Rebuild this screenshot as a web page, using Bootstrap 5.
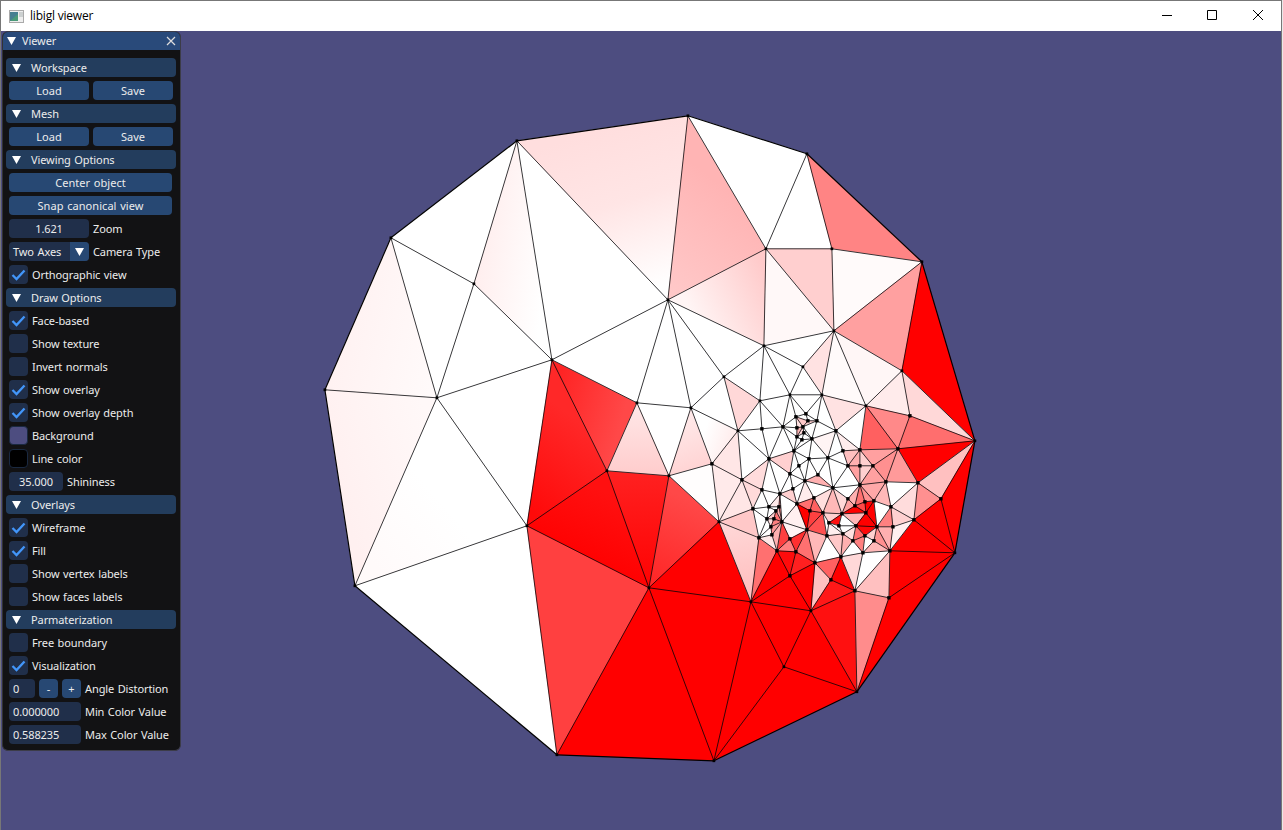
<!DOCTYPE html>
<html lang="en">
<head>
<meta charset="utf-8">
<title>libigl viewer</title>
<link href="https://cdn.jsdelivr.net/npm/bootstrap@5.3.0/dist/css/bootstrap.min.css" rel="stylesheet">
<style>
body{width:1283px;height:830px;overflow:hidden;background:#e8e8e8;font-family:"Open Sans","Noto Sans",sans-serif}
.app-window{width:1282px;height:830px;border:1px solid #777;border-bottom:0}
.caption-bar{height:30px;background:#fff;font-size:12px;color:#000;padding-left:8px}
.caption-bar .win-title{margin-left:6px;letter-spacing:-.2px}
.win-controls svg{display:block}
.scene{background:#4d4d80}
.mesh-view{position:absolute;left:-1px;top:-31px;width:1283px;height:830px}
.gui{position:absolute;left:1px;top:0;width:179px;height:720px;background:#121214;border:1px solid #3c3c48;border-left-color:#333;border-radius:6px;overflow:hidden;color:#ececec;font-family:"Noto Sans",sans-serif;font-size:11px;line-height:19px;letter-spacing:-.1px;word-spacing:.8px}
.gui-title{height:18px;line-height:18px;background:#294a7a;padding:0 4px 0 4px;gap:6px}
.gui-body{padding:8px 4px 0 3px;gap:4px}
.gui-row{height:19px;padding-left:3px;gap:4px}
.gui-head{height:19px;border-radius:4px;background:#233d5d;padding-left:6px;gap:10px}
.gui-btn{height:19px;line-height:18px;border-radius:4px;background:#274873;text-align:center;color:inherit;border:0;padding:0;font-size:inherit;letter-spacing:.05px;word-spacing:inherit}
.gui-field{height:19px;border-radius:4px;background:#202f4a;white-space:nowrap;overflow:hidden}
.gui-check{width:19px;height:19px;border-radius:4px;background:#202f4a;flex:none}
.w80{width:80px}.w163{width:163px}.w54{width:54px}.w72{width:72px}.w26{width:26px}.w19{width:19px}
.drop{width:19px;height:19px;background:#274873}
</style>
</head>
<body>
<div class="app-window d-flex flex-column">
  <header class="caption-bar d-flex align-items-center">
    <svg width="15" height="13" viewBox="0 0 15 13"><rect x=".5" y=".5" width="14" height="12" fill="#eee" stroke="#aaa"/><rect x="1" y="2" width="8" height="9" fill="#457f91"/><path d="M1 11 9 4V11Z" fill="#4a9a78"/><rect x="10" y="2" width="4" height="5" fill="#ccd0d0"/></svg>
    <span class="win-title">libigl viewer</span>
    <div class="win-controls ms-auto">
      <svg width="120" height="30" viewBox="0 0 120 30" fill="none" stroke="#000" stroke-width="1"><path d="M1 14.5h10M46.500 9.500h9v9h-9zM92 9l10 10M102 9l-10 10"/></svg>
    </div>
  </header>
  <main class="scene position-relative flex-grow-1">
    <svg class="mesh-view" viewBox="0 0 1283 830" id="mesh">
      <defs>
        <linearGradient id="gTop" gradientUnits="userSpaceOnUse" x1="600" y1="130" x2="650" y2="290"><stop stop-color="#ffdede"/><stop offset=".45" stop-color="#ffe5e5"/><stop offset="1" stop-color="#fff"/></linearGradient>
        <linearGradient id="gA" gradientUnits="userSpaceOnUse" x1="480" y1="240" x2="550" y2="250"><stop stop-color="#ffeeee"/><stop offset="1" stop-color="#fff"/></linearGradient>
        <linearGradient id="gL" gradientUnits="userSpaceOnUse" x1="335" y1="370" x2="430" y2="390"><stop stop-color="#fff2f2"/><stop offset="1" stop-color="#fffafa"/></linearGradient>
        <linearGradient id="gJ" gradientUnits="userSpaceOnUse" x1="330" y1="460" x2="430" y2="430"><stop stop-color="#fff0f0"/><stop offset="1" stop-color="#fff8f8"/></linearGradient>
        <linearGradient id="gC" gradientUnits="userSpaceOnUse" x1="370" y1="560" x2="440" y2="500"><stop stop-color="#fffafa"/><stop offset="1" stop-color="#fff"/></linearGradient>
        <linearGradient id="gE" gradientUnits="userSpaceOnUse" x1="690" y1="310" x2="766" y2="270"><stop stop-color="#fff5f5"/><stop offset="1" stop-color="#ffcaca"/></linearGradient>
        <linearGradient id="gB" gradientUnits="userSpaceOnUse" x1="670" y1="290" x2="740" y2="200"><stop stop-color="#ffc8c8"/><stop offset="1" stop-color="#ffb4b4"/></linearGradient>
        <linearGradient id="gK" gradientUnits="userSpaceOnUse" x1="556" y1="390" x2="625" y2="410"><stop stop-color="#ff2424"/><stop offset="1" stop-color="#ff4848"/></linearGradient>
        <linearGradient id="gD" gradientUnits="userSpaceOnUse" x1="530" y1="510" x2="590" y2="430"><stop stop-color="#ff0a0a"/><stop offset="1" stop-color="#ff2828"/></linearGradient>
        <linearGradient id="gP" gradientUnits="userSpaceOnUse" x1="570" y1="560" x2="600" y2="490"><stop stop-color="#f00"/><stop offset="1" stop-color="#ff1010"/></linearGradient>
        <linearGradient id="gR" gradientUnits="userSpaceOnUse" x1="645" y1="580" x2="645" y2="475"><stop stop-color="#ff0404"/><stop offset="1" stop-color="#ff2020"/></linearGradient>
        <linearGradient id="gO" gradientUnits="userSpaceOnUse" x1="655" y1="580" x2="690" y2="500"><stop stop-color="#ff2828"/><stop offset="1" stop-color="#ff4848"/></linearGradient>
        <linearGradient id="gN" gradientUnits="userSpaceOnUse" x1="640" y1="475" x2="640" y2="410"><stop stop-color="#ffcccc"/><stop offset="1" stop-color="#ffe6e6"/></linearGradient>
        <linearGradient id="gM" gradientUnits="userSpaceOnUse" x1="705" y1="470" x2="685" y2="420"><stop stop-color="#ffd2d2"/><stop offset="1" stop-color="#ffe8e8"/></linearGradient>
        <linearGradient id="gU" gradientUnits="userSpaceOnUse" x1="735" y1="440" x2="705" y2="430"><stop stop-color="#ffebeb"/><stop offset="1" stop-color="#fff"/></linearGradient>
        <linearGradient id="gQ" gradientUnits="userSpaceOnUse" x1="735" y1="520" x2="750" y2="590"><stop stop-color="#ffd8d8"/><stop offset="1" stop-color="#ffc0c0"/></linearGradient>
      </defs>
    </svg>
    <aside class="gui d-flex flex-column" id="gui">
      <div class="gui-title d-flex align-items-center"><svg width="9" height="8"><path d="M0 0h9L4.500 8z" fill="#fff"/></svg><span class="me-auto">Viewer</span><svg width="10" height="10" stroke="#ddd" stroke-width="1.200"><path d="M1 1l8 8M9 1L1 9"/></svg></div>
      <div class="gui-body d-flex flex-column" id="rows"></div>
    </aside>
  </main>
</div>
<script src="https://cdn.jsdelivr.net/npm/bootstrap@5.3.0/dist/js/bootstrap.bundle.min.js"></script>
<script>
// Control panel rows
const arrow='<svg width="9" height="8"><path d="M0 0h9L4.500 8z" fill="#fff"/></svg>';
const tick='<svg class="d-block" width="19" height="19" fill="none" stroke="#4296fa" stroke-width="2.300"><path d="M3.500 10 7.500 14 15.500 5.500"/></svg>';
const row=c=>`<div class="gui-row d-flex">${c}</div>`;
const head=t=>`<div class="gui-head d-flex align-items-center">${arrow}<span>${t}</span></div>`;
const btn=(t,w)=>`<button class="gui-btn ${w}">${t}</button>`;
const check=(t,on)=>row(`<span class="gui-check">${on?tick:''}</span><span>${t}</span>`);
const field=(v,w,t,c)=>row(`<div class="gui-field ${w} ${c}">${v}</div><span>${t}</span>`);
const swatch=(t,c)=>row(`<span class="gui-check border" style="background:${c};border-color:#1a2940!important"></span><span>${t}</span>`);
document.getElementById('rows').innerHTML=[
 head('Workspace'),row(btn('Load','w80')+btn('Save','w80')),
 head('Mesh'),row(btn('Load','w80')+btn('Save','w80')),
 head('Viewing Options'),row(btn('Center object','w163')),row(btn('Snap canonical view','w163')),
 field('1.621','w80','Zoom','text-center'),
 row(`<div class="gui-field w80 d-flex ps-1"><span class="me-auto">Two Axes</span><span class="drop d-flex align-items-center justify-content-center">${arrow}</span></div><span>Camera Type</span>`),
 check('Orthographic view',1),head('Draw Options'),
 check('Face-based',1),check('Show texture'),check('Invert normals'),check('Show overlay',1),check('Show overlay depth',1),
 swatch('Background','#4d4d80'),swatch('Line color','#000'),
 field('35.000','w54','Shininess','text-center'),
 head('Overlays'),check('Wireframe',1),check('Fill',1),check('Show vertex labels'),check('Show faces labels'),
 head('Parmaterization'),check('Free boundary'),check('Visualization',1),
 row(`<div class="gui-field w26 ps-1">0</div>${btn('-','w19')}${btn('+','w19')}<span>Angle Distortion</span>`),
 field('0.000000','w72','Min Color Value','ps-1'),field('0.588235','w72','Max Color Value','ps-1')
].join('');

// Parameterized mesh: vertex table and coloured faces
const V={};
`A 517,141 B 688,116 C 807,154 D 922,262 E 975,441 F 955,553 G 857,692 H 714,761 I 557,755 J 355,586 K 325,390 L 391,238
a 474,284 b 552,360 c 437,398 d 527,526 e 668,300 f 766,249 g 832,249 h 834,331 i 902,371 j 764,346 k 637,403 l 607,471 m 691,408 n 669,476 o 719,522 p 649,588 q 751,602 r 811,611 s 784,667 t 724,377 u 738,431 v 760,401 w 790,395 x 822,395 y 803,367 z 866,406
aa 910,416 ab 898,449 ac 836,431 ad 783,427 ae 762,429 af 769,459 ag 712,464 ba 742,480
n1 796,417 n2 806,414 n3 817,421 n4 797,428 n5 812,439 n6 802,440 n7 794,451 n8 809,459 n9 828,458 n10 843,451 n11 803,427 n12 797,437 n13 808,421 n14 804,433
r1 762,490 r2 753,509 r3 780,494 r4 790,474 r5 805,481 r6 797,504 r7 807,530 r8 759,538 r9 782,522 r10 769,507 r11 767,519 r12 771,527 r13 772,535 r14 777,551 r15 790,539 r16 796,552 r17 776,511 r18 799,466 r19 793,489 r20 774,519 r21 779,507
s1 818,475 s2 833,488 s3 814,498 s4 810,511 s5 823,513 s6 829,523 s7 827,536 s8 842,514 s9 848,499 s10 855,506 s11 866,513 s12 860,485 s13 848,466 s14 873,466 s15 860,450 s16 886,482 s17 874,501 s18 891,507 s19 856,526 s20 877,527 s21 853,541 s22 865,536 s23 874,541 s24 890,551 s25 843,534 s26 918,483 s27 914,520 s28 941,499 s29 893,527 s30 860,466 s31 865,502 s32 839,526
t1 815,563 t2 831,580 t3 841,557 t4 855,591 t5 863,553 t6 889,598 t7 790,576`.replace(/(\w+) ([\d.]+,[\d.]+)/g,(_,k,p)=>{V[k]=p});
const faces=`L A a #fff;A a b url(#gA);A b e #fff;A B e url(#gTop);B e f url(#gB);B C f #fff;C f g #fff;C D g #ff8484;g D h #fffafa;D i h #ffa0a0;D E i #f00;f g h #ffcfcf;f h j #fff8f8;e f j url(#gE);
L K c url(#gL);L a c #fff;K c J url(#gJ);a b c #fff;J c d url(#gC);c b d #fff;J d I #fff;I d p #ff4040;d b l url(#gD);b k l url(#gK);d l p url(#gP);l n p url(#gR);n o p url(#gO);o p q #f00;I p H #f00;p q H #f00;q s H #f00;q r s #f00;r s G #f00;s H G #f00;r G t4 #ff1010;G t4 t6 #ff8c8c;G t6 F #f00;t6 s24 F #f00;
b e k #fff;k e m #fff;e m t #fff;e t j #fff;k m n #fff;k l n url(#gN);n m ag url(#gM);n ag o #fffdfd;m ag u url(#gU);t v u #ffd8d8;t u m #fff;t j v #fff;ag ba u #ffe6e6;ag ba o #ffeaea;o ba r2 #ffe6e6;o r2 r8 #ffc8c8;o r8 q url(#gQ);q r8 r14 #ff7070;
u v ae #fff;v ae ad #fff;v w ad #fff;ae ad af #fff;ae u af #fff;u af ba #fff;ad af n7 #fff;j h y #fff;y h x #ffe2e2;j y w #fff;j w v #fff;y w x #fff;h x z #fffafa;h i z #fff6f6;z i aa #ffebeb;i aa E #ffd8d8;z aa ab #ff8989;aa ab E #ff6e6e;z ab s15 #ff6060;ab E s26 #f00;s26 E s28 #ffc0c0;E s28 F #f00;x z ac #ffe2e2;z ac s15 #fff;ac s15 n10 #ffecec;
w ad n1 #fff;w n1 n2 #fff;w n2 x #fff;n2 x n3 #fff;x n3 ac #fff;n3 ac n5 #fff;ac n5 n9 #fff4f4;ac n9 n10 #fff;n5 n8 n9 #fff;n5 n7 n8 #fff;n6 n5 n7 #fff;n12 n6 n7 #fff;ad n12 n7 #fff;ad n4 n12 #fff;ad n4 n1 #fff;n1 n4 n11 #ffe0e0;n1 n2 n13 #fff;n1 n13 n11 #ffc8c8;n2 n3 n13 #fff;n13 n3 n11 #ffd0d0;n11 n3 n5 #fff;n11 n5 n14 #fff;n14 n5 n6 #fff;n4 n11 n12 #ffb5b5;n11 n12 n14 #ffd8d8;n14 n12 n6 #fff;
ba af r1 #ffdcdc;ba r1 r2 #ffdada;r1 af r3 #fff;af r3 r4 #fff;af r4 n7 #ffd0d0;n7 r4 r18 #fff;n7 r18 n8 #fff;r18 n8 r5 #fff;r4 r18 r5 #fff;r3 r4 r19 #fff;r4 r19 r5 #fff;r19 r5 r6 #fff;r3 r19 r6 #ffd0d0;r1 r2 r10 #fff;r1 r10 r3 #fff;r10 r3 r21 #ffeaea;r10 r21 r17 #fff;r3 r21 r9 #ff9090;r2 r10 r11 #fff;r2 r11 r8 #fff;r11 r12 r8 #fff;r12 r13 r8 #fff;r10 r11 r17 #fff;r11 r17 r20 #ffd0d0;r17 r20 r9 #ff7070;r11 r20 r12 #ffe0e0;r20 r12 r9 #ff8080;r12 r13 r9 #ff9a9a;r17 r21 r9 #ffb0b0;r3 r9 r6 #fff;r9 r6 r7 #fff0f0;r9 r7 r15 #fff4f4;r9 r14 r15 #ff4040;r13 r9 r14 #ffb0b0;r8 r13 r14 #ffe8e8;r14 r15 r16 #ff8080;r15 r7 r16 #ff3030;
n8 s1 r5 #fff;n8 n9 s1 #fff;n9 s1 s2 #fff;r5 s1 s2 #ffb0b0;r5 s2 s3 #fff;r5 s3 r6 #ffecec;r6 s3 s4 #ff7070;r6 s4 r7 #f00;s3 s4 s5 #ff6060;s3 s2 s5 #ffdede;s2 s5 s8 #ffb8b8;s2 s9 s8 #ffd8d8;s2 s9 s12 #fff;s9 s12 s10 #ffb0b0;s2 s12 s13 #fff;n9 s13 s2 #fff;n9 n10 s13 #fff;n10 s15 s13 #ffc0c0;s15 s13 s30 #ffb0b0;s15 s30 s14 #ffd0d0;s13 s30 s12 #ffa0a0;s30 s14 s12 #ffd0d0;s15 s14 ab #ffa0a0;s14 ab s16 #ff9090;s14 s16 s12 #ffa0a0;ab s16 s26 #ff9a9a;s16 s26 s18 #fff;s26 s18 s27 #ffdcdc;s26 s27 s28 #ff9090;s27 s28 F #f00;s27 F s24 #f00;s18 s27 s29 #ffd0d0;s29 s27 s24 #fff0f0;s18 s29 s20 #ff8080;s29 s20 s24 #ffb0b0;s16 s12 s17 #ffa8a8;s16 s17 s18 #ffb8b8;s12 s10 s31 #ff7070;s31 s10 s11 #ff4848;s31 s11 s17 #f00;s12 s31 s17 #ff9090;s17 s11 s20 #f00;s17 s18 s20 #fff;s9 s10 s8 #ffa0a0;s8 s10 s11 #f00;s8 s11 s19 #ffb8b8;s11 s19 s20 #f00;s19 s20 s22 #ff0808;s19 s22 s21 #ff7070;s20 s22 s23 #ffd0d0;s20 s23 s24 #ff9090;s5 s8 s6 #ffd0d0;s6 s8 s32 #ff1010;s6 s32 s25 #fff;s8 s32 s19 #fff;s32 s25 s19 #fff;s25 s19 s21 #ffe0e0;s4 s5 r7 #ff4040;s5 r7 s7 #ff5050;s5 s6 s7 #fff;s6 s7 s25 #ffeeee;
r7 s7 t1 #ffb8b8;r7 r16 t1 #ff7070;s7 t1 t3 #fff;s7 s25 t3 #ffc8c8;s25 s21 t3 #ffb0b0;s21 t3 t5 #fff;s21 s22 t5 #ff8080;s22 s23 t5 #fff;s23 t5 s24 #ffb8b8;t1 t2 t3 #ff6060;t1 t2 r #ffc0c0;t2 t3 t4 #f00;t2 t4 r #ff1818;t3 t4 t5 #ffd8d8;t4 t5 s24 #fff;t4 s24 t6 #ffc0c0;q r14 t7 #f00;r14 r16 t7 #ff0c0c;r16 t1 t7 #ff2020;t7 t1 r #f00;q t7 r #f00`.split(';').map(s=>s.trim().split(' '));
const edges={};
let fill='';
for(const [p,q,r,c] of faces){
  fill+=`<polygon points="${V[p]} ${V[q]} ${V[r]}" fill="${c}" stroke="${c}" stroke-width=".3"/>`;
  for(const e of [[p,q],[q,r],[p,r]]){const k=e.sort().join(' ');edges[k]=(edges[k]||0)+1}
}
let lines='';
for(const k in edges){const [p,q]=k.split(' ');lines+=`<path d="M${V[p]}L${V[q]}" stroke="#000" stroke-width="${edges[k]==1?1.2:.75}"/>`}
let dots='';
for(const k in V){const [x,y]=V[k].split(',');const z=k.length>1?3.4:2.7;dots+=`<rect x="${x-z/2}" y="${y-z/2}" width="${z}" height="${z}" fill="#000"/>`}
document.getElementById('mesh').insertAdjacentHTML('beforeend',`<g transform="translate(-.1 -.2)">${fill}${lines}${dots}</g>`);
</script>
</body>
</html>
